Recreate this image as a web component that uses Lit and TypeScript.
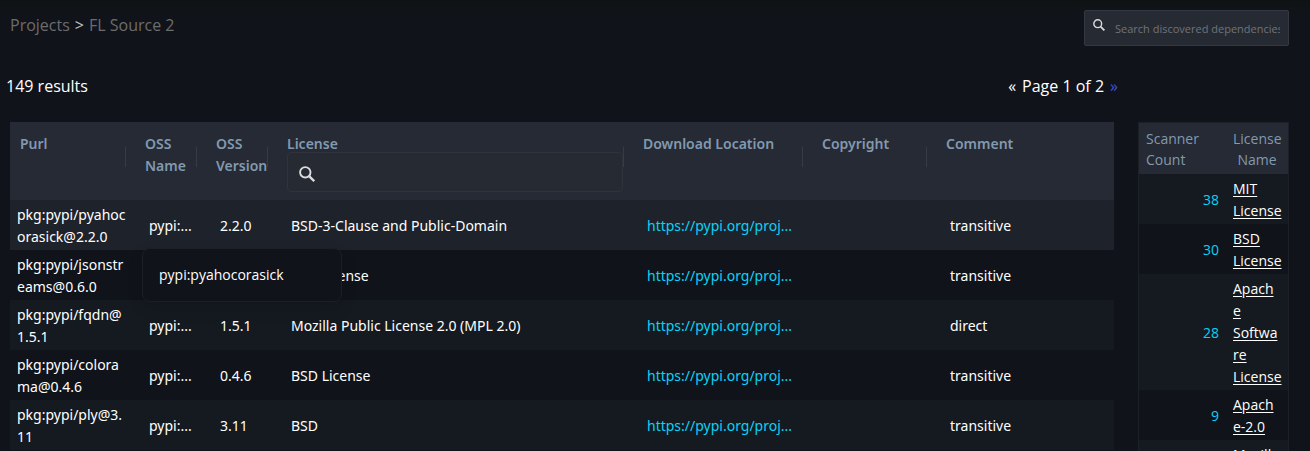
import { LitElement, html, css, nothing } from "lit";
import { customElement, property, state } from "lit/decorators.js";
import { classMap } from "lit/directives/class-map.js";

interface Dependency {
  purl: string;
  name: string;
  version: string;
  license: string;
  comment: string;
}

interface LicenseCount {
  count: number;
  lines: string[];
}

const DEPENDENCIES: Dependency[] = [
  { purl: "pkg:pypi/pyahocorasick@2.2.0", name: "pypi:pyahocorasick", version: "2.2.0", license: "BSD-3-Clause and Public-Domain", comment: "transitive" },
  { purl: "pkg:pypi/jsonstreams@0.6.0", name: "pypi:jsonstreams", version: "0.6.0", license: "MIT License", comment: "transitive" },
  { purl: "pkg:pypi/fqdn@1.5.1", name: "pypi:fqdn", version: "1.5.1", license: "Mozilla Public License 2.0 (MPL 2.0)", comment: "direct" },
  { purl: "pkg:pypi/colorama@0.4.6", name: "pypi:colorama", version: "0.4.6", license: "BSD License", comment: "transitive" },
  { purl: "pkg:pypi/ply@3.11", name: "pypi:ply", version: "3.11", license: "BSD", comment: "transitive" },
];

const LICENSES: LicenseCount[] = [
  { count: 38, lines: ["MIT", "License"] },
  { count: 30, lines: ["BSD", "License"] },
  { count: 28, lines: ["Apach", "e", "Softwa", "re", "License"] },
  { count: 9, lines: ["Apach", "e-2.0"] },
  { count: 7, lines: ["Mozill", "a Public", "License"] },
];

const shorten = (text: string, length: number) =>
  text.length > length ? `${text.slice(0, length)}...` : text;

const searchIcon = html`<svg class="icon" viewBox="0 0 16 16" aria-hidden="true">
  <circle cx="6.3" cy="6.3" r="5.2" fill="none" stroke="currentColor" stroke-width="1.9" />
  <path d="M10.1 10.1 L15.2 15.2" fill="none" stroke="currentColor" stroke-width="2.3" />
</svg>`;

@customElement("search-box")
export class SearchBox extends LitElement {
  @property() label = "";
  @property() placeholder = "";
  @property({ type: Boolean, reflect: true }) large = false;

  static styles = css`
    :host {
      display: block;
    }
    .box {
      box-sizing: border-box;
      display: flex;
      align-items: flex-start;
      gap: 10px;
      height: 36px;
      padding: 0 8px;
      border: 1px solid #343842;
      border-radius: 2px;
      background: #262a33;
    }
    .icon {
      flex: none;
      width: 12px;
      height: 12px;
      margin-top: 8px;
      color: #dcdcdc;
    }
    .input {
      flex: 1;
      min-width: 0;
      height: 100%;
      padding: 0;
      border: 0;
      outline: 0;
      background: transparent;
      color: #fff;
      font: 11px/16px "Open Sans", sans-serif;
    }
    .input::placeholder {
      color: #70737a;
      opacity: 1;
    }
    :host([large]) .box {
      align-items: center;
      height: 40px;
      padding: 0 11px;
      border-color: #2f333d;
      border-radius: 4px;
    }
    :host([large]) .icon {
      width: 16px;
      height: 16px;
      margin-top: 3px;
    }
  `;

  render() {
    return html`<div class="box">
      ${searchIcon}
      <input class="input" type="text" aria-label=${this.label} placeholder=${this.placeholder} />
    </div>`;
  }
}

@customElement("app-root")
export class AppRoot extends LitElement {
  @state() private active = 0;

  static styles = css`
    :host {
      display: block;
      box-sizing: border-box;
      height: 100vh;
      overflow: hidden;
      background: linear-gradient(#101314, #10131a 16px);
      color: #fff;
      font: 14px/22px "Noto Sans", sans-serif;
    }
    .top {
      display: flex;
      justify-content: space-between;
      align-items: flex-start;
      padding: 10px 21px 0 10px;
    }
    .crumbs {
      display: flex;
      gap: 5px;
      padding-top: 4px;
      color: #c4c4c4;
      font-family: "Open Sans", sans-serif;
      font-size: 16px;
    }
    .crumb {
      color: #6c6c6c;
      text-decoration: none;
    }
    .global-search {
      width: 205px;
    }
    .content {
      display: grid;
      grid-template-columns: minmax(0, 1fr) 151px;
      column-gap: 24px;
      align-items: start;
      padding: 29px 21px 0 10px;
    }
    .summary {
      display: flex;
      justify-content: space-between;
      margin: 0 -4px 25px;
      font-family: "Open Sans", sans-serif;
      font-size: 16px;
    }
    .pager {
      display: flex;
      gap: 6px;
    }
    .step {
      padding: 0;
      border: 0;
      background: none;
      color: #3d55d8;
      font: inherit;
    }
    .step:disabled {
      color: #fff;
    }
    .grid,
    .counts {
      width: 100%;
      border-collapse: separate;
      border-spacing: 0;
      table-layout: fixed;
    }
    .w-purl { width: 116px; }
    .w-name, .w-version { width: 71px; }
    .w-license { width: 356px; }
    .w-download { width: 179px; }
    .w-copyright { width: 124px; }
    .w-comment { width: 187px; }
    .head {
      position: relative;
      height: 67px;
      padding: 11px 0 0 19px;
      background: #262a34;
      color: #8299b0;
      font-weight: 600;
      text-align: left;
      vertical-align: top;
    }
    .head:first-child {
      padding-left: 10px;
    }
    .head:not(:last-child)::after {
      content: "";
      position: absolute;
      right: 0;
      top: 25px;
      width: 1px;
      height: 20px;
      background: #363b46;
    }
    .filter {
      margin: -3px 1px 0 0;
    }
    .cell {
      position: relative;
      box-sizing: border-box;
      height: 50px;
      padding: 4px 0 2px 23px;
      vertical-align: middle;
      white-space: nowrap;
    }
    .cell:first-child {
      padding-left: 7px;
      white-space: normal;
      word-break: break-all;
    }
    .url {
      color: #08d2f8;
      text-decoration: none;
    }
    .row:nth-child(odd) .cell,
    .count-row:nth-child(odd) .count-cell {
      background: #151a20;
    }
    .row.active .cell {
      background: #1e222a;
    }
    .tip {
      position: absolute;
      z-index: 2;
      left: 16px;
      top: 48px;
      box-sizing: border-box;
      width: 200px;
      padding: 15px 16px;
      border: 1px solid #1b1f27;
      border-radius: 8px;
      background: #10131a;
      font-family: "Open Sans", sans-serif;
      box-shadow: 0 6px 16px rgba(0, 0, 0, 0.12);
    }
    .side {
      margin-top: 47px;
      border: solid #1c2027;
      border-width: 1px 1px 0;
    }
    .w-count { width: 94px; }
    .count-head {
      height: 50px;
      padding: 1px 0 0 7px;
      background: #262a34;
      color: #8299b0;
      font-family: "Open Sans", sans-serif;
      font-weight: 400;
      line-height: 21px;
      text-align: left;
    }
    .count-head:last-child {
      padding-left: 0;
      padding-right: 7px;
      text-align: center;
    }
    .count-cell {
      padding: 4px 0 2px;
      font-family: "Open Sans", sans-serif;
    }
    .number {
      padding-right: 14px;
      color: #08d2f8;
      text-align: right;
    }
    .license {
      color: #fff;
      text-underline-offset: 2px;
    }
  `;

  private renderRow(dep: Dependency, index: number) {
    const active = index === this.active;
    return html`<tr class=${classMap({ row: true, active })} @mouseenter=${() => (this.active = index)}>
      <td class="cell">${dep.purl}</td>
      <td class="cell">
        ${shorten(dep.name, 5)}
        ${active ? html`<div class="tip" role="tooltip">${dep.name}</div>` : nothing}
      </td>
      <td class="cell">${dep.version}</td>
      <td class="cell">${dep.license}</td>
      <td class="cell"><a class="url" href="#">${shorten("https://pypi.org/project/", 21)}</a></td>
      <td class="cell"></td>
      <td class="cell">${dep.comment}</td>
    </tr>`;
  }

  render() {
    return html`
      <header class="top">
        <nav class="crumbs" aria-label="Breadcrumb">
          <a class="crumb" href="#">Projects</a>
          <span>&gt;</span>
          <a class="crumb" href="#">FL Source 2</a>
        </nav>
        <search-box class="global-search" label="Search" placeholder="Search discovered dependencies"></search-box>
      </header>
      <main class="content">
        <section>
          <div class="summary">
            <span>149 results</span>
            <div class="pager">
              <button class="step" disabled aria-label="Previous page">«</button>
              <span>Page 1 of 2</span>
              <button class="step" aria-label="Next page">»</button>
            </div>
          </div>
          <table class="grid">
            <colgroup>
              <col class="w-purl" />
              <col class="w-name" />
              <col class="w-version" />
              <col class="w-license" />
              <col class="w-download" />
              <col class="w-copyright" />
              <col class="w-comment" />
            </colgroup>
            <thead>
              <tr>
                <th class="head">Purl</th>
                <th class="head">OSS Name</th>
                <th class="head">OSS Version</th>
                <th class="head">
                  License
                  <search-box class="filter" large label="Filter by license"></search-box>
                </th>
                <th class="head">Download Location</th>
                <th class="head">Copyright</th>
                <th class="head">Comment</th>
              </tr>
            </thead>
            <tbody>
              ${DEPENDENCIES.map((dep, i) => this.renderRow(dep, i))}
            </tbody>
          </table>
        </section>
        <aside class="side">
          <table class="counts">
            <colgroup>
              <col class="w-count" />
              <col />
            </colgroup>
            <thead>
              <tr>
                <th class="count-head">Scanner<br />Count</th>
                <th class="count-head">License<br />Name</th>
              </tr>
            </thead>
            <tbody>
              ${LICENSES.map(
                (item) => html`<tr class="count-row">
                  <td class="count-cell number">${item.count}</td>
                  <td class="count-cell">
                    <a class="license" href="#">${item.lines.map((line, i) => html`${i ? html`<br />` : nothing}${line}`)}</a>
                  </td>
                </tr>`
              )}
            </tbody>
          </table>
        </aside>
      </main>
    `;
  }
}
